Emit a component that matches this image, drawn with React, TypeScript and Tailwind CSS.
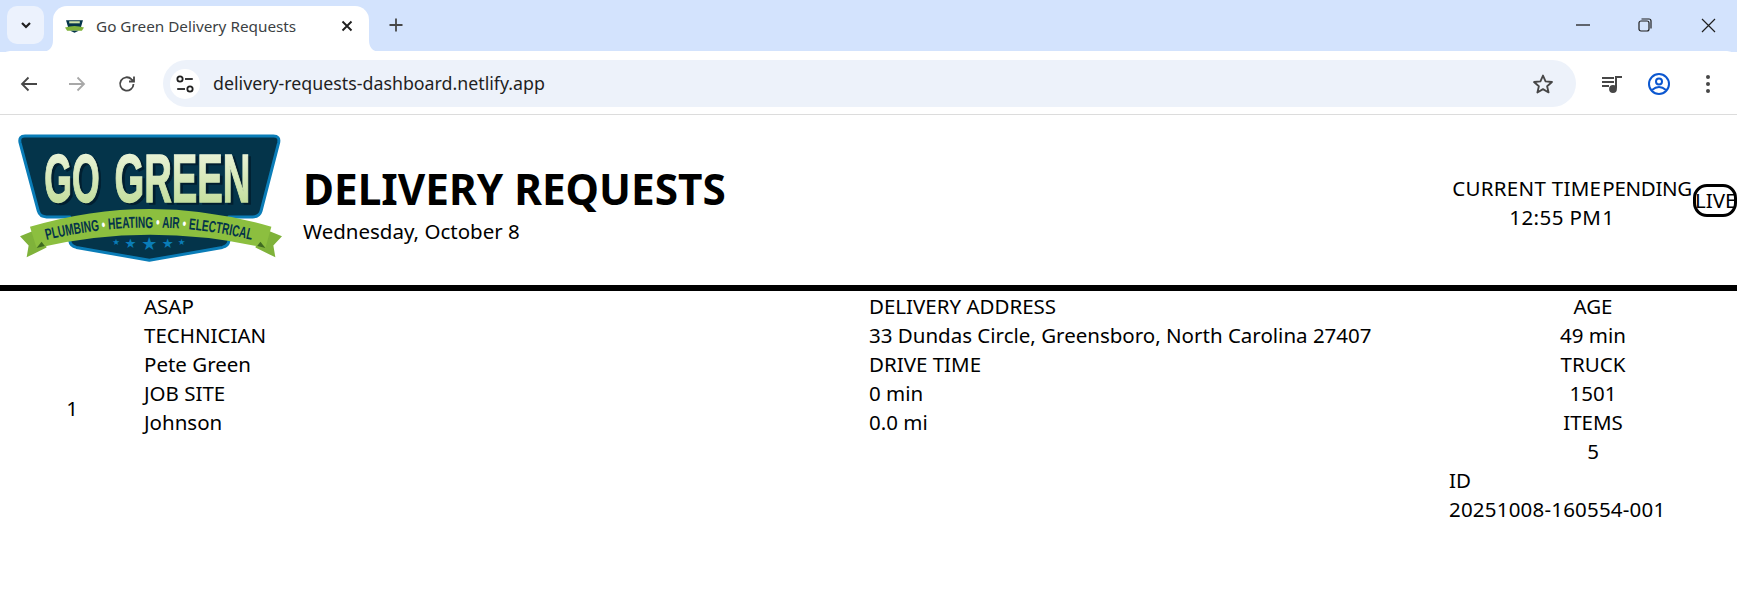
const shieldBlue = "#0a7db8";
const navy = "#04344a";
const logoFont = "'Liberation Sans', sans-serif";

function Logo({ className }: { className: string }) {
  return (
    <svg viewBox="55 40 797 386" className={className}>
      <defs>
        <linearGradient id="letters" x1="0" y1="0" x2="0" y2="1">
          <stop offset="0" stopColor="#f4f8e6" />
          <stop offset="1" stopColor="#b9d98e" />
        </linearGradient>
      </defs>
      <path
        d="M75 46 H824 Q844 46 840 66 L787 272 Q782 290 762 290 H690 V362 Q688 378 670 382 L450 421 L230 382 Q212 378 210 362 V290 H140 Q120 290 115 272 L60 66 Q56 46 75 46 Z"
        fill={navy}
        stroke={shieldBlue}
        strokeWidth="9"
        strokeLinejoin="round"
      />
      <g fontFamily={logoFont} fontWeight="700" fontSize="208">
        <text x="141" y="252" textLength="167" lengthAdjust="spacingAndGlyphs" fill="#021f30" stroke="#021f30" strokeWidth="4">GO</text>
        <text x="353" y="252" textLength="410" lengthAdjust="spacingAndGlyphs" fill="#021f30" stroke="#021f30" strokeWidth="4">GREEN</text>
        <text x="133" y="245" textLength="167" lengthAdjust="spacingAndGlyphs" fill="url(#letters)" stroke="url(#letters)" strokeWidth="4">GO</text>
        <text x="345" y="245" textLength="410" lengthAdjust="spacingAndGlyphs" fill="url(#letters)" stroke="url(#letters)" strokeWidth="4">GREEN</text>
      </g>
      <path d="M60 348 L125 322 L140 382 L80 412 L86 376 Z" fill="#7fb23a" />
      <path d="M850 348 L785 322 L770 382 L830 412 L824 376 Z" fill="#7fb23a" />
      <path d="M90 320 Q450 212 818 320 L800 384 Q450 304 110 384 Z" fill="#8cbf3f" />
      <path d="M110 384 L135 378 L125 365 Z" fill="#3f6a22" />
      <path d="M800 384 L775 378 L785 365 Z" fill="#3f6a22" />
      <path id="ribbon-line" d="M140 360 Q450 284 762 360" fill="none" />
      <text fontFamily={logoFont} fontWeight="700" fontSize="48" fill={navy}>
        <textPath href="#ribbon-line" textLength="624" lengthAdjust="spacingAndGlyphs">
          PLUMBING <tspan fill="#ffffff">•</tspan> HEATING <tspan fill="#ffffff">•</tspan> AIR <tspan fill="#ffffff">•</tspan> ELECTRICAL
        </textPath>
      </text>
      <g fill={shieldBlue} fontFamily="'DejaVu Sans', sans-serif" textAnchor="middle">
        <text x="350" y="375" fontSize="26">★</text>
        <text x="393" y="384" fontSize="40">★</text>
        <text x="450" y="390" fontSize="54">★</text>
        <text x="505" y="384" fontSize="40">★</text>
        <text x="547" y="375" fontSize="26">★</text>
      </g>
    </svg>
  );
}

function TuneIcon() {
  return (
    <svg width="20" height="20" viewBox="0 0 18 18" fill="none" stroke="#1f1f1f" strokeWidth="1.6">
      <circle cx="4.5" cy="4.5" r="2.4" />
      <path d="M9 4.5 H16" />
      <path d="M2 13.5 H9" />
      <circle cx="13.5" cy="13.5" r="2.4" />
    </svg>
  );
}

function ChromeBar() {
  return (
    <div className="font-['Noto_Sans',sans-serif]">
      <div className="flex h-[52px] items-start bg-[#d3e3fd] pt-[6px]">
        <div className="ml-[7px] flex h-[38px] w-[37px] items-center justify-center rounded-[10px] bg-[#ecf2fd]">
          <svg width="14" height="14" viewBox="0 0 14 14" fill="none" stroke="#1f1f1f" strokeWidth="2.2">
            <path d="M3 5 L7 9 L11 5" />
          </svg>
        </div>
        <div className="relative ml-[9px] flex h-[46px] w-[316px] items-center rounded-t-[14px] bg-white pb-[6px]">
          <svg width="12" height="12" viewBox="0 0 12 12" className="absolute -left-[12px] bottom-0">
            <path d="M12 0 Q12 12 0 12 H12 Z" fill="#ffffff" />
          </svg>
          <svg width="12" height="12" viewBox="0 0 12 12" className="absolute -right-[12px] bottom-0">
            <path d="M0 0 Q0 12 12 12 H0 Z" fill="#ffffff" />
          </svg>
          <svg width="19" height="13" viewBox="0 0 18 12" className="ml-[12px]">
            <path d="M1 0 H17 L15 7 H3 Z" fill={navy} />
            <path d="M4 2 H14" stroke="#cfe3a8" strokeWidth="2" />
            <path d="M0 7 Q9 4 18 7 L16 10 H2 Z" fill="#7fb23a" />
            <path d="M5 10 H13 L9 12 Z" fill={navy} />
          </svg>
          <span className="ml-[12px] text-[15.3px] text-[#3c3f43]">Go Green Delivery Requests</span>
          <svg width="14" height="14" viewBox="0 0 14 14" fill="none" stroke="#1f1f1f" strokeWidth="1.9" className="absolute left-[287px] top-[13px]">
            <path d="M2.5 2.5 L11.5 11.5 M11.5 2.5 L2.5 11.5" />
          </svg>
        </div>
        <svg width="16" height="16" viewBox="0 0 16 16" fill="none" stroke="#474747" strokeWidth="1.8" className="ml-[19px] mt-[11px]">
          <path d="M8 1.5 V14.5 M1.5 8 H14.5" />
        </svg>
        <div className="ml-auto flex h-[38px] items-center">
          <svg width="14" height="14" viewBox="0 0 14 14" stroke="#1f1f1f" strokeWidth="1.3" className="mr-[48px]">
            <path d="M0 7 H14" />
          </svg>
          <svg width="14" height="14" viewBox="0 0 14 14" fill="none" stroke="#1f1f1f" strokeWidth="1.2" className="mr-[49px]">
            <rect x="1" y="3" width="10" height="10" rx="2" />
            <path d="M3.5 1 H11 Q13 1 13 3 V10.5" />
          </svg>
          <svg width="15" height="15" viewBox="0 0 15 15" stroke="#1f1f1f" strokeWidth="1.2" className="mr-[21px]">
            <path d="M1 1 L14 14 M14 1 L1 14" />
          </svg>
        </div>
      </div>
      <div className="-mt-px flex h-[64px] items-center rounded-t-[10px] border-b border-[#dcdcdc] bg-white pt-[2px]">
        <svg width="18" height="18" viewBox="0 0 18 18" fill="none" stroke="#474747" strokeWidth="1.8" className="ml-[20px]">
          <path d="M17 9 H2 M8.5 2.5 L2 9 L8.5 15.5" />
        </svg>
        <svg width="18" height="18" viewBox="0 0 18 18" fill="none" stroke="#a8a8a8" strokeWidth="1.8" className="ml-[30px]">
          <path d="M1 9 H16 M9.5 2.5 L16 9 L9.5 15.5" />
        </svg>
        <svg width="18" height="18" viewBox="0 0 18 18" fill="none" stroke="#474747" strokeWidth="1.8" className="ml-[32px]">
          <path d="M15.5 9 A6.7 6.7 0 1 1 13.6 4.3 L16 6.5 M16 1.5 V6.5 H11" />
        </svg>
        <div className="ml-[27px] flex h-[47px] w-[1413px] items-center rounded-[24px] bg-[#edf2fa]">
          <div className="ml-[7px] flex h-[30px] w-[30px] items-center justify-center rounded-full bg-white">
            <TuneIcon />
          </div>
          <span className="ml-[13px] text-[17.8px] text-[#1f1f1f]">delivery-requests-dashboard.netlify.app</span>
          <svg width="22" height="22" viewBox="0 0 24 24" fill="none" stroke="#474747" strokeWidth="2" strokeLinejoin="round" className="ml-auto mr-[22px]">
            <path d="M12 2.8 L14.8 9.2 L21.8 9.8 L16.5 14.4 L18.1 21.2 L12 17.6 L5.9 21.2 L7.5 14.4 L2.2 9.8 L9.2 9.2 Z" />
          </svg>
        </div>
        <svg width="22" height="20" viewBox="0 0 22 20" fill="none" stroke="#474747" strokeWidth="1.8" className="ml-[25px]">
          <path d="M1 4 H13 M1 8 H13 M1 12 H8" />
          <path d="M15 14.5 V3 H21" strokeWidth="2" />
          <circle cx="12" cy="15" r="3" fill="#474747" />
        </svg>
        <svg width="24" height="24" viewBox="0 0 24 24" fill="none" stroke="#0b57d0" strokeWidth="2" className="ml-[24px]">
          <circle cx="12" cy="12" r="10" />
          <circle cx="12" cy="9.5" r="3" />
          <path d="M5 18 Q12 12 19 18" />
        </svg>
        <svg width="6" height="20" viewBox="0 0 6 20" fill="#474747" className="ml-[34px]">
          <circle cx="3" cy="3" r="2" />
          <circle cx="3" cy="10" r="2" />
          <circle cx="3" cy="17" r="2" />
        </svg>
      </div>
    </div>
  );
}

export default function App() {
  return (
    <div className="h-[592px] w-[1737px] overflow-hidden bg-white font-['Noto_Sans',sans-serif] text-[20.5px] leading-[29px] text-black">
      <ChromeBar />
      <header className="flex h-[176px] items-center border-b-[6px] border-black pl-[18px]">
        <Logo className="mb-[4px] h-[128px] w-[265px]" />
        <div className="ml-[20px] mt-[5px]">
          <h1 className="text-[42.3px] leading-[57px] font-bold">DELIVERY REQUESTS</h1>
          <p className="leading-[29px]">Wednesday, October 8</p>
        </div>
        <div className="ml-auto flex items-center">
          <div className="mt-[6px] text-right">
            <div className="tracking-[0.3px]">CURRENT TIME</div>
            <div className="tracking-[0.4px]">12:55 PM</div>
          </div>
          <div className="ml-px mt-[6px]">
            <div className="tracking-[-0.3px]">PENDING</div>
            <div>1</div>
          </div>
          <div className="ml-px w-[44px] whitespace-nowrap rounded-[14px] border-[3px] border-black leading-[27px] -indent-[1px]">LIVE</div>
        </div>
      </header>
      <div className="grid grid-cols-[144px_725px_580px_288px] pt-[1px]">
        <div className="flex items-center justify-center">1</div>
        <div>
          <div>ASAP</div>
          <div>TECHNICIAN</div>
          <div>Pete Green</div>
          <div>JOB SITE</div>
          <div>Johnson</div>
        </div>
        <div>
          <div>DELIVERY ADDRESS</div>
          <div>33 Dundas Circle, Greensboro, North Carolina 27407</div>
          <div>DRIVE TIME</div>
          <div>0 min</div>
          <div>0.0 mi</div>
        </div>
        <div>
          <div className="text-center">
            <div>AGE</div>
            <div>49 min</div>
            <div>TRUCK</div>
            <div>1501</div>
            <div>ITEMS</div>
            <div>5</div>
          </div>
          <div>ID</div>
          <div className="tracking-[0.2px]">20251008-160554-001</div>
        </div>
      </div>
    </div>
  );
}
